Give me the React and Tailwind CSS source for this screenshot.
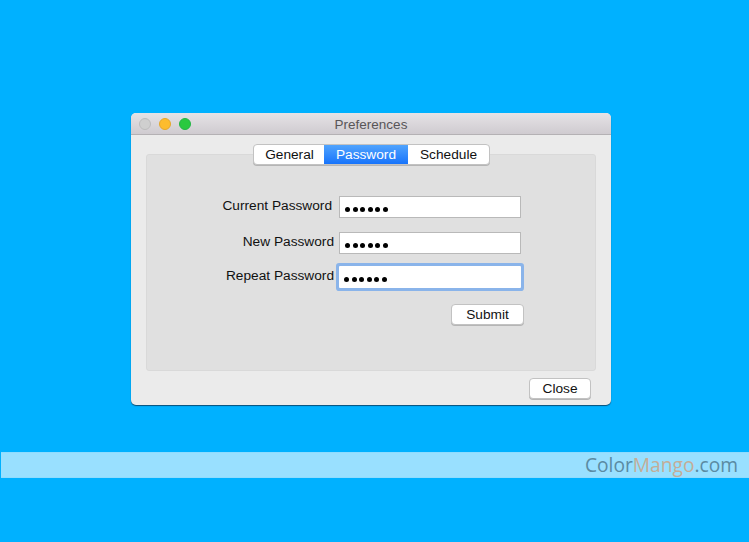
const sans = 'font-["Liberation_Sans",Arial,sans-serif]'

const Dots = () => (
  <span className="flex items-center gap-[2.6px] pl-[5px] pt-[4px]">
    {[0, 1, 2, 3, 4, 5].map((i) => (
      <span key={i} className="h-[5px] w-[5px] rounded-full bg-black" />
    ))}
  </span>
)

const PasswordRow = ({ label, labelClass, rowClass, focused }) => (
  <div className={`flex items-center ${rowClass}`}>
    <div className={`w-[187px] pb-[2px] text-right text-[13.7px] leading-[16px] text-[#111] ${labelClass}`}>{label}</div>
    <div
      className={
        focused
          ? 'ml-[5px] flex h-[22px] w-[182px] items-center rounded-[1px] bg-white shadow-[0_0_0_3px_#8ab4ea]'
          : 'ml-[5px] flex h-[22px] w-[182px] items-center border border-[#b9b9b9] bg-white'
      }
    >
      <Dots />
    </div>
  </div>
)

const Button = ({ children, className }) => (
  <button className={`h-[21px] rounded-[4px] border border-[#c2c2c2] bg-white text-[13.7px] leading-none text-[#111] shadow-[0_1px_0_#b5b5b5] ${className}`}>
    {children}
  </button>
)

export default function App() {
  return (
    <div className={`flex min-h-screen flex-col bg-[#00b1ff] pt-[113px] ${sans}`}>
      <div className="ml-[131px] flex h-[292px] w-[480px] flex-col overflow-hidden rounded-[5px] bg-[#ebebeb] shadow-[0_1px_1px_#0b4f78]">
        <div className="relative flex h-[22px] items-center justify-center border-b border-[#b4b1b4] bg-gradient-to-b from-[#e6e3e6] to-[#cfcbd0]">
          <div className="absolute left-[8px] top-[5px] flex gap-[8px]">
            <span className="h-[12px] w-[12px] rounded-full border border-[#bcbcbc] bg-[#cfcfcf]" />
            <span className="h-[12px] w-[12px] rounded-full border border-[#e5a72a] bg-[#fdbc2e]" />
            <span className="h-[12px] w-[12px] rounded-full border border-[#22b545] bg-[#29c940]" />
          </div>
          <span className="pt-[2px] text-[13.5px] leading-none text-[#585558]">Preferences</span>
        </div>

        <div className="mx-[15px] mt-[19px] h-[217px] rounded-[3px] border border-[#d9d9d9] bg-[#e0e0e0]">
          <div className="-mt-[11px] ml-[106px] flex h-[21px] w-[237px] overflow-hidden rounded-[4px] border border-[#c2c2c2] bg-white text-[13.7px] shadow-[0_1px_0_#b5b5b5]">
            <div className="flex w-[70px] items-center justify-center pl-[1px] pt-[1px] text-[#111]">General</div>
            <div className="flex w-[84px] items-center justify-center bg-gradient-to-b from-[#4fa3fd] to-[#1673fb] pt-[1px] text-white">Password</div>
            <div className="flex flex-1 items-center justify-center pt-[1px] text-[#111]">Schedule</div>
          </div>

          <PasswordRow label="Current Password" labelClass="pr-[2px]" rowClass="mt-[31px]" />
          <PasswordRow label="New Password" rowClass="mt-[14px]" />
          <PasswordRow label="Repeat Password" rowClass="mt-[12px]" focused />

          <div className="mt-[16px] flex justify-end pr-[71px]">
            <Button className="w-[73px]">Submit</Button>
          </div>
        </div>

        <div className="mt-[7px] flex justify-end pr-[20px]">
          <Button className="w-[62px]">Close</Button>
        </div>
      </div>

      <div className="ml-[1px] mt-[47px] flex h-[26px] items-center justify-end border-y border-[#8fdcff] bg-[#99e0ff] pr-[11px] font-['Open_Sans',sans-serif] text-[19.2px] leading-none">
        <span className="text-[#5b8ba3]">Color</span>
        <span className="text-[#c4ad98]">Mango</span>
        <span className="text-[#5b8ba3]">.com</span>
      </div>
    </div>
  )
}
